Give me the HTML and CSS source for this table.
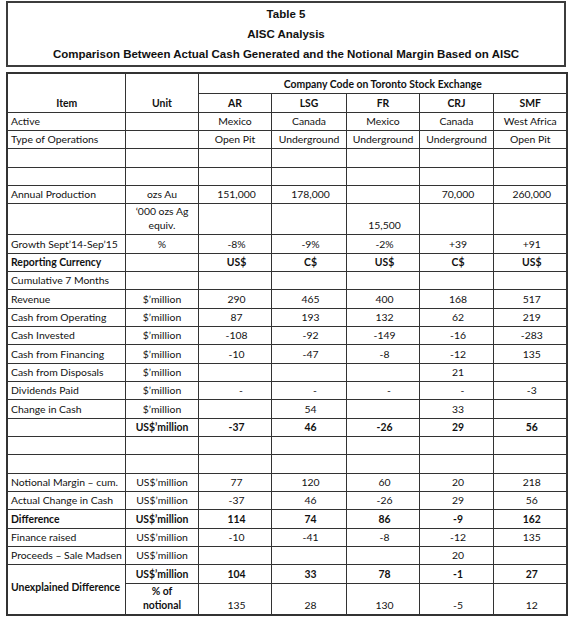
FILE: index.html
```html
<!DOCTYPE html>
<html>
<head>
<meta charset="utf-8">
<title>Table 5 – AISC Analysis</title>
<link rel="stylesheet" href="styles.css">
</head>
<body>
<div class="page">
  <div class="title">
    <div>Table 5</div>
    <div>AISC Analysis</div>
    <div>Comparison Between Actual Cash Generated and the Notional Margin Based on AISC</div>
  </div>
  <table class="sheet">
    <colgroup>
      <col class="c-item"><col class="c-unit"><col class="c-co"><col class="c-co2"><col class="c-co"><col class="c-co3"><col class="c-co3">
    </colgroup>
    <tr class="r-top">
      <td rowspan="2" class="hd ctr">Item</td>
      <td rowspan="2" class="hd ctr">Unit</td>
      <td colspan="5" class="hd ctr">Company Code on Toronto Stock Exchange</td>
    </tr>
    <tr class="r-hd">
      <td class="hd ctr">AR</td><td class="hd ctr">LSG</td><td class="hd ctr">FR</td><td class="hd ctr">CRJ</td><td class="hd ctr">SMF</td>
    </tr>
    <tr><td>Active</td><td></td><td class="ctr">Mexico</td><td class="ctr">Canada</td><td class="ctr">Mexico</td><td class="ctr">Canada</td><td class="ctr">West Africa</td></tr>
    <tr><td>Type of Operations</td><td></td><td class="ctr">Open Pit</td><td class="ctr">Underground</td><td class="ctr">Underground</td><td class="ctr">Underground</td><td class="ctr">Open Pit</td></tr>
    <tr><td></td><td></td><td></td><td></td><td></td><td></td><td></td></tr>
    <tr><td></td><td></td><td></td><td></td><td></td><td></td><td></td></tr>
    <tr><td>Annual Production</td><td class="ctr">ozs Au</td><td class="num">151,000</td><td class="num">178,000</td><td></td><td class="num">70,000</td><td class="num">260,000</td></tr>
    <tr class="r-two"><td></td><td class="ctr wrap">‘000 ozs Ag<br>equiv.</td><td></td><td></td><td class="num">15,500</td><td></td><td></td></tr>
    <tr><td>Growth Sept’14-Sep’15</td><td class="ctr">%</td><td class="num">-8%</td><td class="num">-9%</td><td class="num">-2%</td><td class="num">+39</td><td class="num">+91</td></tr>
    <tr class="b"><td>Reporting Currency</td><td></td><td class="num">US$</td><td class="num">C$</td><td class="num">US$</td><td class="num">C$</td><td class="num">US$</td></tr>
    <tr><td>Cumulative 7 Months</td><td></td><td></td><td></td><td></td><td></td><td></td></tr>
    <tr><td>Revenue</td><td class="ctr">$’million</td><td class="num">290</td><td class="num">465</td><td class="num">400</td><td class="num">168</td><td class="num">517</td></tr>
    <tr><td>Cash from Operating</td><td class="ctr">$’million</td><td class="num">87</td><td class="num">193</td><td class="num">132</td><td class="num">62</td><td class="num">219</td></tr>
    <tr><td>Cash Invested</td><td class="ctr">$’million</td><td class="num">-108</td><td class="num">-92</td><td class="num">-149</td><td class="num">-16</td><td class="num">-283</td></tr>
    <tr><td>Cash from Financing</td><td class="ctr">$’million</td><td class="num">-10</td><td class="num">-47</td><td class="num">-8</td><td class="num">-12</td><td class="num">135</td></tr>
    <tr><td>Cash from Disposals</td><td class="ctr">$’million</td><td></td><td></td><td></td><td class="num">21</td><td></td></tr>
    <tr><td>Dividends Paid</td><td class="ctr">$’million</td><td class="num dash">-</td><td class="num dash">-</td><td class="num dash">-</td><td class="num dash">-</td><td class="num">-3</td></tr>
    <tr><td>Change in Cash</td><td class="ctr">$’million</td><td></td><td class="num">54</td><td></td><td class="num">33</td><td></td></tr>
    <tr class="b"><td></td><td class="ctr">US$’million</td><td class="num">-37</td><td class="num">46</td><td class="num">-26</td><td class="num">29</td><td class="num">56</td></tr>
    <tr><td></td><td></td><td></td><td></td><td></td><td></td><td></td></tr>
    <tr><td></td><td></td><td></td><td></td><td></td><td></td><td></td></tr>
    <tr><td>Notional Margin – cum.</td><td class="ctr">US$’million</td><td class="num">77</td><td class="num">120</td><td class="num">60</td><td class="num">20</td><td class="num">218</td></tr>
    <tr><td>Actual Change in Cash</td><td class="ctr">US$’million</td><td class="num">-37</td><td class="num">46</td><td class="num">-26</td><td class="num">29</td><td class="num">56</td></tr>
    <tr class="b"><td>Difference</td><td class="ctr">US$’million</td><td class="num">114</td><td class="num">74</td><td class="num">86</td><td class="num">-9</td><td class="num">162</td></tr>
    <tr><td>Finance raised</td><td class="ctr">US$’million</td><td class="num">-10</td><td class="num">-41</td><td class="num">-8</td><td class="num">-12</td><td class="num">135</td></tr>
    <tr><td>Proceeds – Sale Madsen</td><td class="ctr">US$’million</td><td></td><td></td><td></td><td class="num">20</td><td></td></tr>
    <tr class="b"><td rowspan="2" class="mid">Unexplained Difference</td><td class="ctr">US$’million</td><td class="num">104</td><td class="num">33</td><td class="num">78</td><td class="num">-1</td><td class="num">27</td></tr>
    <tr class="r-last"><td class="ctr wrap bold">% of<br>notional</td><td class="num">135</td><td class="num">28</td><td class="num">130</td><td class="num">-5</td><td class="num">12</td></tr>
  </table>
</div>
</body>
</html>
```

FILE: styles.css
```css
html, body {
  margin: 0;
  padding: 0;
  background: #ffffff;
}

.page {
  padding: 1px 0 0 6px;
  width: 560px;
}

.title {
  box-sizing: border-box;
  height: 66px;
  border: 2px solid #3c3c3c;
  padding: 1px 0 2px;
  font-family: "Liberation Sans", Arial, sans-serif;
  font-weight: bold;
  font-size: 11.5px;
  line-height: 20px;
  text-align: center;
  color: #111;
}

.sheet {
  margin-top: 5px;
  width: 560px;
  table-layout: fixed;
  border-collapse: collapse;
  border: 2px solid #333;
  font-family: Lato, "Open Sans", sans-serif;
  font-size: 10.4px;
  line-height: 13px;
  color: #111;
}

.c-item { width: 118px; }
.c-unit { width: 73px; }
.c-co { width: 73px; }
.c-co2 { width: 75px; }
.c-co3 { width: 74px; }

.sheet tr { height: 18.35px; }
.sheet tr.r-top { height: 20px; }
.sheet tr.r-hd { height: 19px; }
.sheet tr.r-two { height: 29px; }
.sheet tr.r-last { height: 26px; }

.sheet td {
  border: 1px solid #333;
  padding: 0 2px 2px 3px;
  vertical-align: bottom;
  white-space: nowrap;
  overflow: hidden;
}

.sheet td.ctr { text-align: center; }
.sheet td.num { text-align: center; padding-left: 5px; padding-right: 1px; }
.sheet td.dash { padding-left: 14px; }
.sheet td.wrap { line-height: 14px; }
.sheet td.hd { font-weight: bold; }
.sheet td.bold { font-weight: bold; }
.sheet td.mid { vertical-align: middle; font-weight: bold; padding-bottom: 4px; }
.sheet tr.b td { font-weight: bold; }
```
